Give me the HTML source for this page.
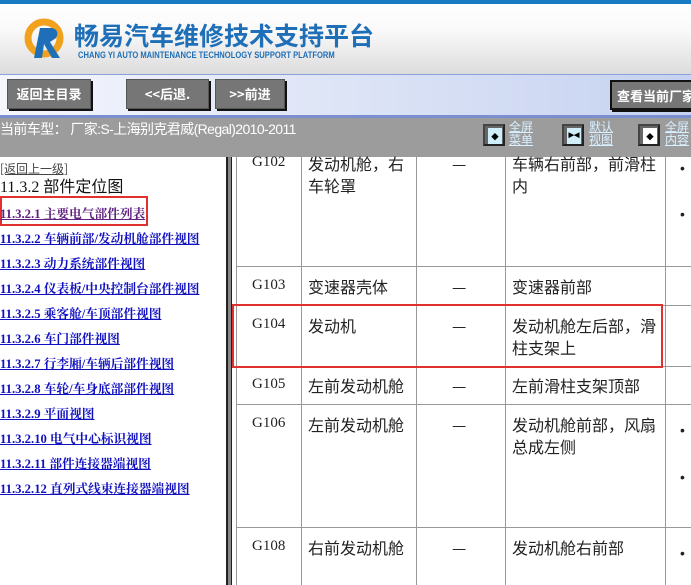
<!DOCTYPE html>
<html><head><meta charset="utf-8"><style>
*{margin:0;padding:0;box-sizing:border-box}
body{width:691px;height:585px;overflow:hidden;position:relative;background:#fff;font-family:"Liberation Serif","Noto Serif CJK SC",serif}
.a{position:absolute}
.hdr{left:0;top:0;width:691px;height:74px;background:linear-gradient(#fff,#fafafa 40%,#dcdcdc)}
.topbar{left:0;top:0;width:691px;height:4px;background:#1a7cc0}
.title{left:74px;top:17px;font:bold 25px "Noto Sans CJK SC",sans-serif;color:#1f6fb8;letter-spacing:0}
.sub{left:78px;top:50px;font:bold 9.5px "Liberation Sans",sans-serif;color:#1f6fb8;transform:scaleX(.8);transform-origin:left;white-space:nowrap}
.nav{left:0;top:74px;width:691px;height:44px;background:linear-gradient(90deg,#f4f6fc,#c6d2f0);border-top:1px solid #8ea0d8;border-bottom:3px solid #7a8ed0}
.btn{top:79px;height:30px;background:#767676;color:#fff;font:bold 13px "Noto Sans CJK SC",sans-serif;text-align:center;line-height:28px;border:1px solid #555;box-shadow:2px 2px 0 #111}
.stat{left:0;top:118px;width:691px;height:39px;background:#9c9c9c}
.st{left:0;top:119px;color:#fff;font:14px "Liberation Sans","Noto Sans CJK SC",sans-serif;letter-spacing:-.6px}
.ic{top:124px;width:22px;height:22px;background:#666;border:2px solid #444;border-right-color:#222;border-bottom-color:#222}
.ic i{position:absolute;left:3px;top:2px;width:14px;height:16px;background:#cfeefa;font:bold 9px/16px sans-serif;color:#000;text-align:center;font-style:normal}
.il{top:120px;font:12px/13px "Noto Sans CJK SC",sans-serif;color:#d8f0ff;text-decoration:underline}
.left{left:0;top:157px;width:226px;height:428px;background:#fff}
.lk{left:0;font:bold 12.7px "Liberation Serif","Noto Serif CJK SC",serif;color:#1010c0;text-decoration:underline;white-space:nowrap}
.divd{left:226px;top:157px;width:6px;height:428px;background:#888;border-left:2px solid #222;border-right:1px solid #222}
.vl{width:1px;background:#999;top:157px;height:428px}
.hl{height:1px;background:#999;left:236px;width:455px}
.c{font:16px/22px "Noto Sans CJK SC",sans-serif;color:#222}
.g{font:15px "Liberation Serif",serif;color:#222}
.dot{font:14px sans-serif;color:#222;left:680px}
</style></head><body>
<div class="a hdr"></div><div class="a topbar"></div>
<svg class="a" style="left:22px;top:18px" width="52" height="46" viewBox="0 0 52 46">
<circle cx="22" cy="20" r="16" fill="none" stroke="#f2a11c" stroke-width="7"/>
<path d="M18 10 L30 10 Q38 12 34 20 L28 24 L38 40 L30 40 L22 26 L20 40 L12 40 Z" fill="#1f6fb8"/>
</svg>
<div class="a title">畅易汽车维修技术支持平台</div>
<div class="a sub">CHANG YI AUTO MAINTENANCE TECHNOLOGY SUPPORT PLATFORM</div>
<div class="a nav"></div>
<div class="a btn" style="left:7px;width:84px">返回主目录</div>
<div class="a btn" style="left:126px;width:83px">&lt;&lt;后退.</div>
<div class="a btn" style="left:215px;width:70px">&gt;&gt;前进</div>
<div class="a btn" style="left:610px;width:90px;border:2px solid #111;top:80px;text-align:left;padding-left:5px">查看当前厂家</div>
<div class="a stat"></div>
<div class="a st">当前车型： 厂家:S-上海别克君威(Regal)2010-2011</div>
<div class="a ic" style="left:483px"><i>◆</i></div><div class="a il" style="left:509px">全屏<br>菜单</div>
<div class="a ic" style="left:562px"><i style="font-size:7px">▶◀</i></div><div class="a il" style="left:589px">默认<br>视图</div>
<div class="a ic" style="left:638px"><i style="background:#fff">◆</i></div><div class="a il" style="left:665px">全屏<br>内容</div>
<div class="a left"></div>
<div class="a" style="left:0;top:160px;font:12px 'Noto Sans CJK SC',sans-serif;color:#444;text-decoration:underline">[返回上一级]</div>
<div class="a" style="left:0;top:173px;font:16px 'Liberation Serif','Noto Sans CJK SC',serif;color:#111">11.3.2 部件定位图</div>
<div class="a" style="left:0;top:196px;width:148px;height:30px;border:2px solid #e03030"></div>
<div class="a lk" style="top:203px;color:#602080">11.3.2.1 主要电气部件列表</div>
<div class="a lk" style="top:228px">11.3.2.2 车辆前部/发动机舱部件视图</div>
<div class="a lk" style="top:253px">11.3.2.3 动力系统部件视图</div>
<div class="a lk" style="top:278px">11.3.2.4 仪表板/中央控制台部件视图</div>
<div class="a lk" style="top:303px">11.3.2.5 乘客舱/车顶部件视图</div>
<div class="a lk" style="top:328px">11.3.2.6 车门部件视图</div>
<div class="a lk" style="top:353px">11.3.2.7 行李厢/车辆后部件视图</div>
<div class="a lk" style="top:378px">11.3.2.8 车轮/车身底部部件视图</div>
<div class="a lk" style="top:403px">11.3.2.9 平面视图</div>
<div class="a lk" style="top:428px">11.3.2.10 电气中心标识视图</div>
<div class="a lk" style="top:453px">11.3.2.11 部件连接器端视图</div>
<div class="a lk" style="top:478px">11.3.2.12 直列式线束连接器端视图</div>
<div class="a divd"></div>
<div class="a vl" style="left:236px"></div><div class="a vl" style="left:301px"></div><div class="a vl" style="left:416px"></div><div class="a vl" style="left:505px"></div><div class="a vl" style="left:665px"></div>
<div class="a hl" style="top:266px"></div><div class="a hl" style="top:305px"></div><div class="a hl" style="top:366px"></div><div class="a hl" style="top:404px"></div><div class="a hl" style="top:527px"></div>
<div class="a" style="left:232px;top:304px;width:431px;height:64px;border:2px solid #e03030"></div>
<div class="a g" style="left:252px;top:154px">G102</div>
<div class="a c" style="left:308px;top:152px">发动机舱，右<br>车轮罩</div>
<div class="a c" style="left:452px;top:152px">—</div>
<div class="a c" style="left:512px;top:152px">车辆右前部，前滑柱<br>内</div>
<div class="a g" style="left:252px;top:277px">G103</div><div class="a c" style="left:308px;top:275px">变速器壳体</div><div class="a c" style="left:452px;top:275px">—</div><div class="a c" style="left:512px;top:275px">变速器前部</div>
<div class="a g" style="left:252px;top:316px">G104</div><div class="a c" style="left:308px;top:314px">发动机</div><div class="a c" style="left:452px;top:314px">—</div><div class="a c" style="left:512px;top:314px">发动机舱左后部，滑<br>柱支架上</div>
<div class="a g" style="left:252px;top:376px">G105</div><div class="a c" style="left:308px;top:374px">左前发动机舱</div><div class="a c" style="left:452px;top:374px">—</div><div class="a c" style="left:512px;top:374px">左前滑柱支架顶部</div>
<div class="a g" style="left:252px;top:415px">G106</div><div class="a c" style="left:308px;top:413px">左前发动机舱</div><div class="a c" style="left:452px;top:413px">—</div><div class="a c" style="left:512px;top:413px">发动机舱前部，风扇<br>总成左侧</div>
<div class="a g" style="left:252px;top:538px">G108</div><div class="a c" style="left:308px;top:536px">右前发动机舱</div><div class="a c" style="left:452px;top:536px">—</div><div class="a c" style="left:512px;top:536px">发动机舱右前部</div>
<div class="a dot" style="top:160px">•</div><div class="a dot" style="top:206px">•</div><div class="a dot" style="top:422px">•</div><div class="a dot" style="top:469px">•</div><div class="a dot" style="top:545px">•</div>
</body></html>
